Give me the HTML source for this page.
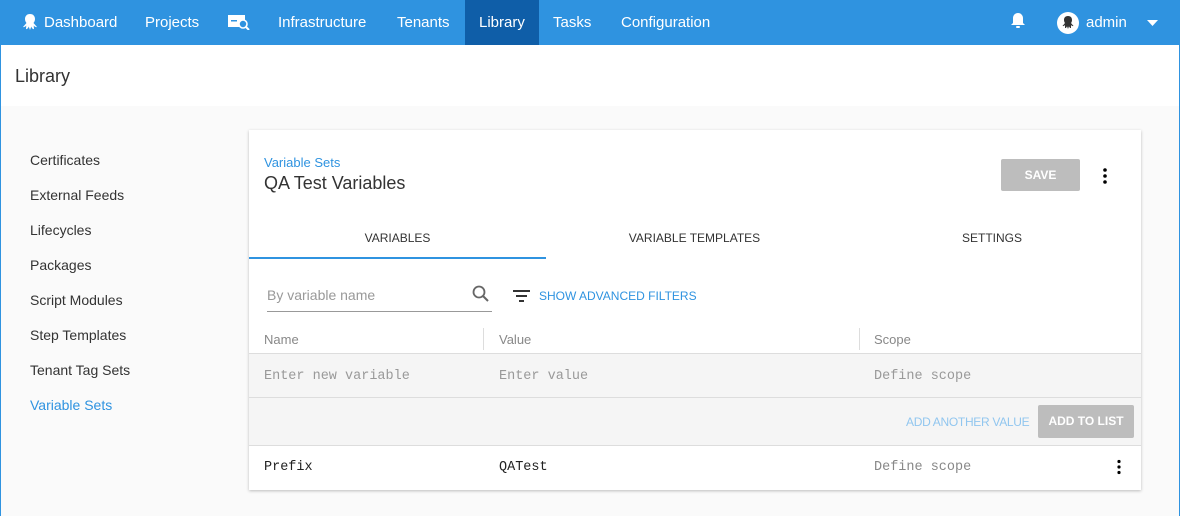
<!DOCTYPE html>
<html><head><style>
*{box-sizing:border-box;margin:0;padding:0}
body{width:1180px;height:516px;overflow:hidden;font-family:"Liberation Sans",sans-serif;background:#fafafa;position:relative}
.bl{position:absolute;top:0;width:1px;height:516px;background:#2f93e0;z-index:5}
.nav{position:absolute;left:0;top:0;width:1180px;height:45px;background:#2f93e0;color:#fff;font-size:15px}
.nav span{position:absolute;top:14px}
.lib{position:absolute;left:465px;top:0;width:74px;height:45px;background:#0f5ea8}
.hdr{position:absolute;left:1px;top:45px;width:1178px;height:61px;background:#fff}
.hdr div{position:absolute;left:14px;top:21px;font-size:18px;color:#333}
.side{position:absolute;left:30px;font-size:14px;color:#333}
.card{position:absolute;left:249px;top:130px;width:892px;height:360px;background:#fff;box-shadow:0 1px 3px rgba(0,0,0,.25)}
.a{position:absolute}
.mono{font-family:"Liberation Mono",monospace;font-size:13.5px}
</style></head><body>
<div class="bl" style="left:0"></div><div class="bl" style="left:1179px"></div>
<div class="nav">
<div class="lib"></div>
<svg class="a" style="left:22px;top:13px" width="16" height="18" viewBox="0 0 16 18"><path d="M8 1C4.5 1 3 3.5 3 6c0 2 .8 3 1.5 4L1 14c1 .5 2.5-.5 3.3-1.5L4 16c1 .5 2.3-1 2.7-2.5L8 17l1.300-3.5c.4 1.5 1.7 3 2.7 2.5l-.3-3.5c.8 1 2.3 2 3.3 1.5l-3.5-4c.7-1 1.5-2 1.5-4C13 3.5 11.5 1 8 1z" fill="#fff"/></svg>
<span style="left:44px">Dashboard</span>
<span style="left:145px">Projects</span>
<svg class="a" style="left:228px;top:15px" width="22" height="15"><rect x="0" y="0" width="17" height="12" fill="#fff"/><circle cx="15" cy="9" r="4" fill="#2f93e0" stroke="#fff" stroke-width="1.6"/><line x1="18" y1="12" x2="21" y2="15" stroke="#fff" stroke-width="2"/><rect x="3" y="5" width="6" height="1.5" fill="#2f93e0"/></svg>
<span style="left:278px">Infrastructure</span>
<span style="left:397px">Tenants</span>
<span style="left:479px">Library</span>
<span style="left:553px">Tasks</span>
<span style="left:621px">Configuration</span>
<svg class="a" style="left:1011px;top:12px" width="14" height="17" viewBox="0 0 14 17"><path d="M7 1c-3 0-5 2.5-5 5v5L0 13h14l-2-2V6c0-2.5-2-5-5-5z" fill="#fff"/><rect x="5" y="14" width="4" height="2" rx="1" fill="#fff"/></svg>
<svg class="a" style="left:1057px;top:12px" width="22" height="22"><circle cx="11" cy="11" r="11" fill="#fff"/><path d="M11 4c-3 0-4 2-4 4 0 1.5.5 2.3 1 3L5.5 14c1 .3 2-.3 2.5-1L8 16c.8.3 1.6-.7 2-1.8L11 17l1-2.8c.4 1.100 1.2 2.100 2 1.8v-3c.5.7 1.5 1.3 2.5 1L14 11c.5-.7 1-1.5 1-3 0-2-1-4-4-4z" fill="#333"/></svg>
<span style="left:1086px">admin</span>
<svg class="a" style="left:1147px;top:20px" width="12" height="6"><path d="M0 0h11L5.5 6z" fill="#fff"/></svg>
</div>
<div class="hdr"><div>Library</div></div>
<div class="side" style="top:152px">Certificates</div>
<div class="side" style="top:187px">External Feeds</div>
<div class="side" style="top:222px">Lifecycles</div>
<div class="side" style="top:257px">Packages</div>
<div class="side" style="top:292px">Script Modules</div>
<div class="side" style="top:327px">Step Templates</div>
<div class="side" style="top:362px">Tenant Tag Sets</div>
<div class="side" style="top:397px;color:#2f93e0">Variable Sets</div>
<div class="card">
<div class="a" style="left:15px;top:25px;font-size:13px;color:#2f93e0">Variable Sets</div>
<div class="a" style="left:15px;top:43px;font-size:18px;color:#333">QA Test Variables</div>
<div class="a" style="left:752px;top:29px;width:79px;height:32px;background:#bdbdbd;border-radius:2px;color:#fff;font-size:12px;font-weight:bold;text-align:center;line-height:32px">SAVE</div>
<svg class="a" style="left:853px;top:37px" width="6" height="18"><circle cx="3" cy="3" r="1.8"/><circle cx="3" cy="9" r="1.8"/><circle cx="3" cy="15" r="1.8"/></svg>
<div class="a" style="left:0;top:101px;width:297px;text-align:center;font-size:12px;color:#333">VARIABLES</div>
<div class="a" style="left:297px;top:101px;width:297px;text-align:center;font-size:12px;color:#333">VARIABLE TEMPLATES</div>
<div class="a" style="left:594px;top:101px;width:298px;text-align:center;font-size:12px;color:#333">SETTINGS</div>
<div class="a" style="left:0;top:127px;width:297px;height:2px;background:#2f93e0"></div>
<div class="a" style="left:18px;top:157px;font-size:14px;color:#999">By variable name</div>
<svg class="a" style="left:223px;top:155px" width="18" height="18"><circle cx="7" cy="7" r="5.5" fill="none" stroke="#666" stroke-width="1.8"/><line x1="11" y1="11" x2="16" y2="16" stroke="#666" stroke-width="2"/></svg>
<div class="a" style="left:18px;top:181px;width:225px;height:1px;background:#999"></div>
<svg class="a" style="left:264px;top:160px" width="17" height="12"><rect x="0" y="0" width="17" height="2" fill="#333"/><rect x="3" y="5" width="11" height="2" fill="#333"/><rect x="6" y="10" width="5" height="2" fill="#333"/></svg>
<div class="a" style="left:290px;top:159px;font-size:12px;color:#2f93e0">SHOW ADVANCED FILTERS</div>
<div class="a" style="left:15px;top:202px;font-size:13px;color:#888">Name</div>
<div class="a" style="left:234px;top:198px;width:1px;height:22px;background:#ddd"></div>
<div class="a" style="left:250px;top:202px;font-size:13px;color:#888">Value</div>
<div class="a" style="left:610px;top:198px;width:1px;height:22px;background:#ddd"></div>
<div class="a" style="left:625px;top:202px;font-size:13px;color:#888">Scope</div>
<div class="a" style="left:0;top:223px;width:892px;height:93px;background:#f5f5f5;border-top:1px solid #ddd;border-bottom:1px solid #ddd"></div>
<div class="a" style="left:0;top:267px;width:892px;height:1px;background:#ddd"></div>
<div class="a mono" style="left:15px;top:239px;color:#999">Enter new variable</div>
<div class="a mono" style="left:250px;top:239px;color:#999">Enter value</div>
<div class="a mono" style="left:625px;top:239px;color:#999">Define scope</div>
<div class="a" style="left:657px;top:285px;font-size:12px;color:#91c6ef;white-space:nowrap;letter-spacing:-0.3px">ADD ANOTHER VALUE</div>
<div class="a" style="left:789px;top:275px;width:96px;height:33px;background:#bdbdbd;border-radius:2px;color:#fff;font-size:12px;font-weight:bold;text-align:center;line-height:33px">ADD TO LIST</div>
<div class="a mono" style="left:15px;top:330px;color:#222">Prefix</div>
<div class="a mono" style="left:250px;top:330px;color:#222">QATest</div>
<div class="a mono" style="left:625px;top:330px;color:#888">Define scope</div>
<svg class="a" style="left:867px;top:329px" width="6" height="16"><circle cx="3" cy="2.5" r="1.6"/><circle cx="3" cy="8" r="1.6"/><circle cx="3" cy="13.5" r="1.6"/></svg>
</div>
</body></html>
